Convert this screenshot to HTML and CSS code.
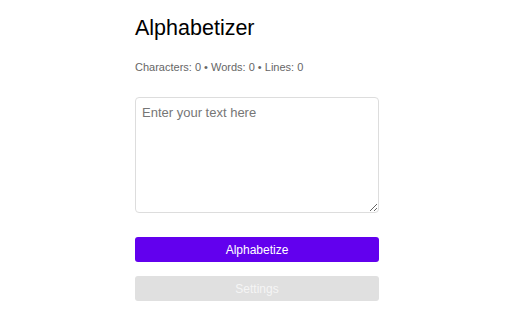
FILE: index.html
```html
<!DOCTYPE html>
<html lang="en">
<head>
    <meta charset="UTF-8">
    <meta name="viewport" content="width=device-width, initial-scale=1.0">
    <title>Alphabetizer</title>
    <link rel="stylesheet" href="styles.css">
</head>
<body>
    <main class="container">
        <h1 class="title">Alphabetizer</h1>
        <p class="stats">Characters: 0 &bull; Words: 0 &bull; Lines: 0</p>
        <textarea class="input" placeholder="Enter your text here"></textarea>
        <button class="btn btn-primary">Alphabetize</button>
        <button class="btn btn-secondary" disabled>Settings</button>
    </main>
</body>
</html>
```

FILE: styles.css
```css
* {
    margin: 0;
    padding: 0;
    box-sizing: border-box;
}

body {
    font-family: 'Liberation Sans', Arial, sans-serif;
    background: #ffffff;
    color: #111;
}

.container {
    width: 244px;
    margin: 0 auto;
    padding-top: 15px;
    display: flex;
    flex-direction: column;
    transform: translateX(1px);
}

.title {
    font-size: 21.5px;
    font-weight: normal;
    line-height: 26px;
    color: #000;
}

.stats {
    margin-top: 19px;
    font-size: 11px;
    line-height: 14px;
    color: #666;
}

.input {
    margin-top: 23px;
    height: 116px;
    padding: 7px 6px;
    border: 1px solid #ddd;
    border-radius: 4px;
    font-family: inherit;
    font-size: 13px;
    line-height: 16px;
    resize: vertical;
}

.input::placeholder {
    color: #767676;
}

.btn {
    height: 25px;
    border: none;
    border-radius: 3px;
    font-family: inherit;
    font-size: 12px;
    color: #fff;
}

.btn-primary {
    margin-top: 24px;
    background: #6200ee;
}

.btn-secondary {
    margin-top: 14px;
    background: #e0e0e0;
    color: #f5f5f5;
}
```
